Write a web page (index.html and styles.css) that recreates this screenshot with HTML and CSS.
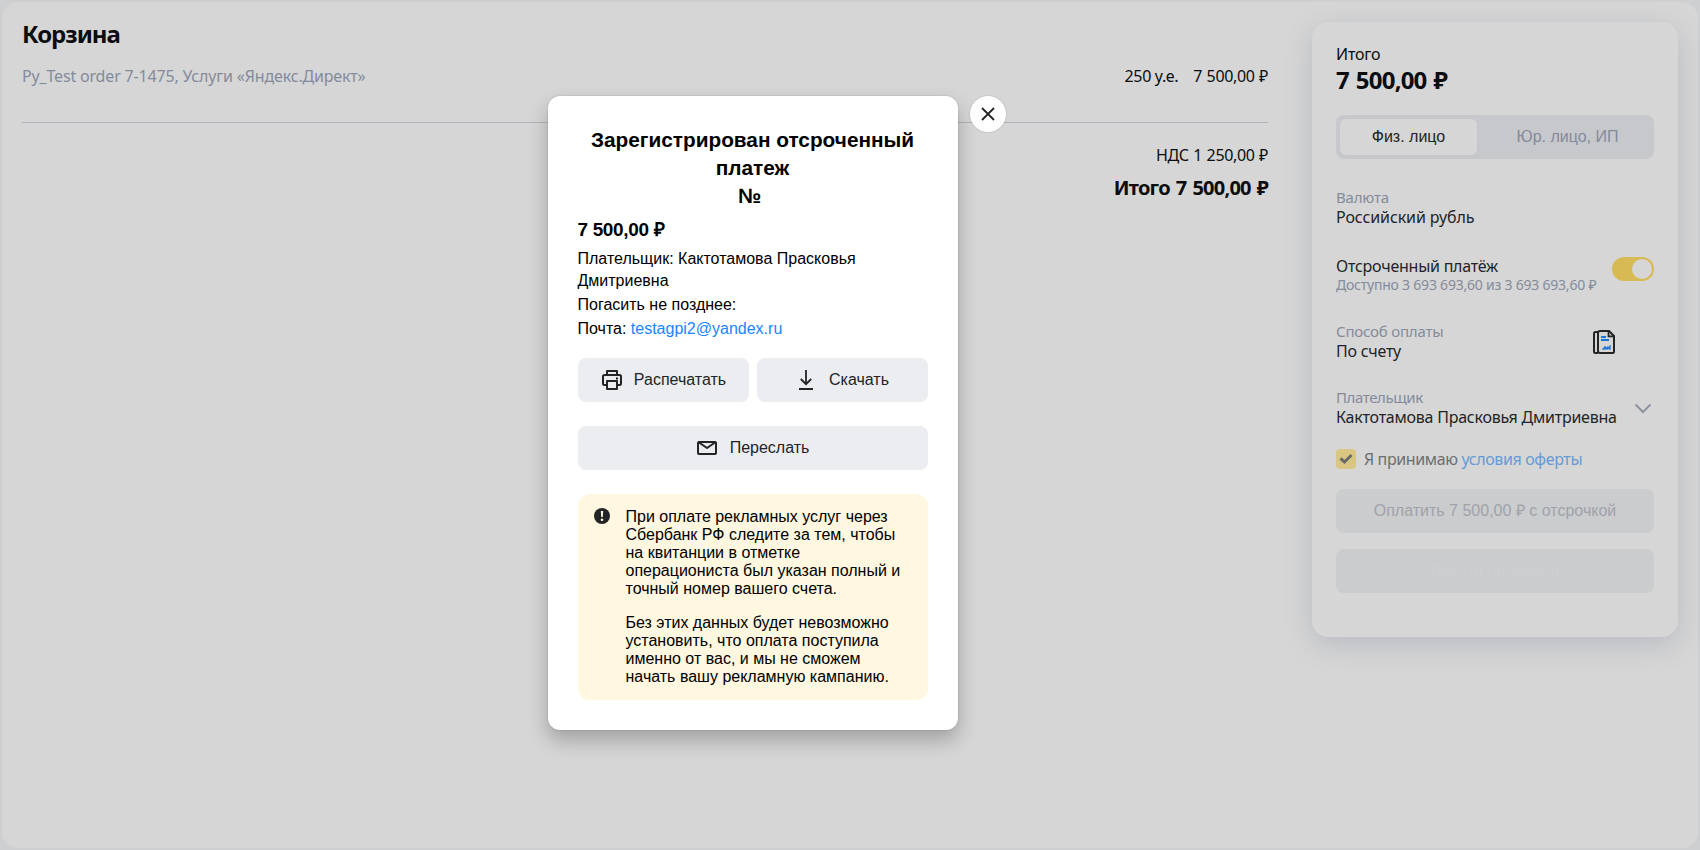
FILE: index.html
```html
<!DOCTYPE html>
<html lang="ru">
<head>
<meta charset="utf-8">
<title>Корзина</title>
<link rel="stylesheet" href="styles.css">
</head>
<body>
<div class="page">
  <main class="cart">
    <h1 class="cart-title"><span>Корзина</span></h1>
    <div class="order">
      <span class="order-name">Py_Test order 7-1475, Услуги «Яндекс.Директ»</span>
      <span class="order-qty">250 у.е.</span>
      <span class="order-sum">7 500,00 ₽</span>
    </div>
    <div class="vat"><span>НДС 1 250,00 ₽</span></div>
    <div class="total"><span>Итого 7 500,00 ₽</span></div>
  </main>
  <aside class="summary">
    <div class="sum-label"><span>Итого</span></div>
    <div class="sum-value"><span>7 500,00 ₽</span></div>
    <div class="tabs">
      <div class="tab tab-active"><span>Физ. лицо</span></div>
      <div class="tab"><span>Юр. лицо, ИП</span></div>
    </div>
    <div class="field currency">
      <div class="label"><span>Валюта</span></div>
      <div class="value value-currency"><span>Российский рубль</span></div>
    </div>
    <div class="field deferred">
      <div>
        <div class="value"><span>Отсроченный платёж</span></div>
        <div class="hint"><span>Доступно 3 693 693,60 из 3 693 693,60 ₽</span></div>
      </div>
      <div class="toggle"><div class="knob"></div></div>
    </div>
    <div class="field method">
      <div>
        <div class="label"><span>Способ оплаты</span></div>
        <div class="value"><span>По счету</span></div>
      </div>
      <svg class="doc-icon" width="24" height="26" viewBox="0 0 24 26" fill="none">
        <path d="M6 3H3.500Q2 3 2 4.500V22.500Q2 24 3.500 24H6" stroke="#222426" stroke-width="2"/>
        <path d="M17 2H8Q6 2 6 4V22Q6 24 8 24H20.500Q22 24 22 22.500V7Z" stroke="#222426" stroke-width="2" stroke-linejoin="round"/>
        <path d="M16.500 2V7.300H22" stroke="#222426" stroke-width="1.700"/>
        <path d="M9 8H14M9 11H17" stroke="#1c74d8" stroke-width="2"/>
        <path d="M10 20.500L12.500 17.500H14V19L15.500 17.500L16.500 18L18.500 16V20.500H17V19.500L15.500 20.500H14.500V19.800L13 20.500Z" fill="#1c74d8" stroke="#1c74d8" stroke-width=".3"/>
      </svg>
    </div>
    <div class="field payer">
      <div>
        <div class="label label-payer"><span>Плательщик</span></div>
        <div class="value"><span>Кактотамова Прасковья Дмитриевна</span></div>
      </div>
      <svg class="chevron" width="18" height="12" viewBox="0 0 18 12" fill="none"><path d="M1.500 1.500L9 9L16.500 1.500" stroke="#8d93a0" stroke-width="2"/></svg>
    </div>
    <div class="agree">
      <div class="check"><svg width="20" height="20" viewBox="0 0 20 20" fill="none"><path d="M4.500 9.500L8.500 13L15.500 6" stroke="#6b6a65" stroke-width="3"/></svg></div>
      <span class="agree-text">Я принимаю <a class="offer">условия оферты</a></span>
    </div>
    <div class="pay pay-main"><span>Оплатить 7 500,00 ₽ с отсрочкой</span></div>
    <div class="pay pay-promo"><span>Ввести промокод</span></div>
  </aside>
</div>
<div class="layer">
  <section class="modal">
    <h2 class="modal-title">Зарегистрирован отсроченный<br>платеж<br>№&nbsp;</h2>
    <div class="modal-sum">7 500,00 ₽</div>
    <p class="info">Плательщик: Кактотамова Прасковья<br>Дмитриевна</p>
    <p class="info">Погасить не позднее:</p>
    <p class="info">Почта: <a class="mail">testagpi2@yandex.ru</a></p>
    <div class="actions">
      <div class="btn btn-print">
        <svg width="20" height="20" viewBox="0 0 20 20" fill="none" stroke="#222426" stroke-width="2" stroke-linejoin="round"><path d="M5 5V1H15V5M5 15H2.500Q1 15 1 13.500V6.500Q1 5 2.500 5H17.500Q19 5 19 6.500V13.500Q19 15 17.500 15H15"/><path d="M5 11H15V19H5Z"/><path d="M14 8.500H16" stroke-width="1.800"/></svg>
        <span>Распечатать</span>
      </div>
      <div class="btn btn-download">
        <svg width="20" height="20" viewBox="0 0 20 20" fill="none" stroke="#222426" stroke-width="1.800"><path d="M10 0V14M4.800 9L10 14.200L15.200 9M3 19H17"/></svg>
        <span>Скачать</span>
      </div>
      <div class="btn btn-wide">
        <svg width="22" height="16" viewBox="0 0 22 16" fill="none" stroke="#222426" stroke-width="2" stroke-linejoin="round"><rect x="2" y="2" width="18" height="12" rx="1"/><path d="M3 2.500L11 8L19 2.500"/></svg>
        <span>Переслать</span>
      </div>
    </div>
    <div class="notice">
      <svg width="16" height="16" viewBox="0 0 16 16"><circle cx="8" cy="8" r="8" fill="#222426"/><path d="M6.800 3H9.200L8.800 9H7.200Z" fill="#fff8e0"/><circle cx="8" cy="11.700" r="1.300" fill="#fff8e0"/></svg>
      <div>
        <p>При оплате рекламных услуг через<br>Сбербанк РФ следите за тем, чтобы<br>на квитанции в отметке<br>операциониста был указан полный и<br>точный номер вашего счета.</p>
        <p>Без этих данных будет невозможно<br>установить, что оплата поступила<br>именно от вас, и мы не сможем<br>начать вашу рекламную кампанию.</p>
      </div>
    </div>
  </section>
  <div class="close"><svg width="14" height="14" viewBox="0 0 14 14"><path d="M1 1L13 13M13 1L1 13" stroke="#222426" stroke-width="1.800"/></svg></div>
</div>
</body>
</html>
```
FILE: styles.css
```css
* { box-sizing: border-box; }
body { margin: 0; height: 850px; overflow: hidden; padding: 2px; background: #cecfd1; color: #0c0d0e; font: 16px/22px "Noto Sans", sans-serif; }
h1, h2, p { margin: 0; }
.page { display: flex; justify-content: space-between; align-items: flex-start; height: 846px; padding: 20px; border-radius: 16px; background: #d6d6d6; white-space: nowrap; }
.cart { width: 1246px; }
.cart-title { font-size: 24px; line-height: 24px; letter-spacing: -1px; }
.order { display: flex; height: 77px; padding-top: 19px; border-bottom: 1px solid #b1b2bb; }
.order-name { flex: 1; color: #848b9b; letter-spacing: -.17px; }
.order-qty { margin-right: 15px; letter-spacing: -.35px; }
.order-sum, .vat { letter-spacing: -.35px; word-spacing: .7px; }
.vat { margin-top: 21px; text-align: right; }
.total { margin-top: 9px; font-size: 20px; line-height: 26px; font-weight: 700; text-align: right; letter-spacing: -.75px; word-spacing: 1.5px; }
.summary { width: 366px; height: 615px; padding: 22px 24px; border-radius: 16px; background: #d6d6d6; color: #222426; box-shadow: 0 8px 28px rgba(90, 105, 130, .24); }
.sum-label { line-height: 20px; color: #0c0d0e; letter-spacing: -.2px; }
.sum-value { font-size: 24px; line-height: 32px; font-weight: 700; color: #0c0d0e; letter-spacing: -.8px; word-spacing: 1.5px; }
.tabs { display: flex; height: 44px; margin-top: 19px; padding: 4px; border-radius: 8px; background: #c7c8cc; font-family: "Liberation Sans", sans-serif; color: #848b9b; }
.tab { flex: 1; display: flex; align-items: center; justify-content: center; padding-left: 8px; }
.tab-active { flex: 0 0 137px; padding: 0; border-radius: 6px; background: #d6d6d6; color: #222426; }
.field { display: flex; justify-content: space-between; height: 38px; }
.label { font-size: 15px; line-height: 18px; color: #848b9b; letter-spacing: -.2px; }
.label-payer { letter-spacing: -.4px; }
.value { margin-top: 1px; line-height: 20px; letter-spacing: -.24px; }
.value-currency { letter-spacing: -.1px; }
.deferred .value { margin-top: 0; }
.hint { font-size: 14px; line-height: 18px; color: #848b9b; letter-spacing: -.22px; }
.currency { display: block; margin-top: 29px; }
.deferred { margin-top: 30px; }
.toggle { width: 42px; height: 24px; margin-top: 1px; padding: 2px; border-radius: 12px; background: #d8ba55; }
.knob { width: 20px; height: 20px; margin-left: 18px; border-radius: 50%; background: #d6d6d6; }
.method { margin-top: 28px; }
.doc-icon { margin: 7px 38px 0 0; }
.payer { margin-top: 28px; }
.chevron { margin: 15px 2px 0 0; }
.agree { display: flex; margin-top: 23px; height: 20px; line-height: 20px; color: #6d6e6f; letter-spacing: -.38px; }
.check { width: 20px; height: 20px; margin-right: 8px; border-radius: 4px; background: #d9c682; }
.check svg { display: block; }
.offer { color: #659bd7; }
.pay { display: flex; align-items: center; justify-content: center; height: 44px; border-radius: 8px; background: #cbcccd; font-family: "Liberation Sans", sans-serif; }
.pay-main { margin-top: 20px; color: #9fa2ab; }
.pay-promo { margin-top: 16px; color: #cecfd0; }
.layer { position: absolute; top: 96px; left: 547.5px; display: flex; gap: 12px; align-items: flex-start; font-family: "Liberation Sans", sans-serif; white-space: nowrap; color: #000; }
.modal { width: 410px; height: 634px; padding: 30px; border-radius: 12px; background: #fff; box-shadow: 0 10px 20px rgba(0, 0, 0, .25), 0 0 2px rgba(0, 0, 0, .2); }
.modal-title { font-size: 20.8px; line-height: 28px; text-align: center; }
.modal-sum { margin-top: 7px; font-size: 19px; line-height: 26px; font-weight: 700; letter-spacing: -.35px; }
.info { margin-top: 2px; line-height: 22px; }
.modal-sum + .info { margin-top: 5px; }
.mail { color: #1a85ff; }
.actions { display: grid; grid-template-columns: 171px 171px; gap: 24px 8px; margin-top: 18px; }
.btn { display: flex; align-items: center; justify-content: center; gap: 12px; height: 44px; border-radius: 8px; background: #ecedf1; color: #222426; }
.btn-print { padding-left: 2px; }
.btn-download { gap: 13px; padding-left: 1px; }
.btn-wide { grid-column: 1 / 3; gap: 12px; }
.notice { display: flex; align-items: flex-start; gap: 16px; height: 206px; margin-top: 24px; padding: 14px 16px; border-radius: 12px; background: #fff7df; line-height: 18px; }
.notice p + p { margin-top: 16px; }
.close { display: flex; align-items: center; justify-content: center; width: 36px; height: 36px; border-radius: 50%; background: #fff; box-shadow: 0 0 2px rgba(0, 0, 0, .2); }
```
